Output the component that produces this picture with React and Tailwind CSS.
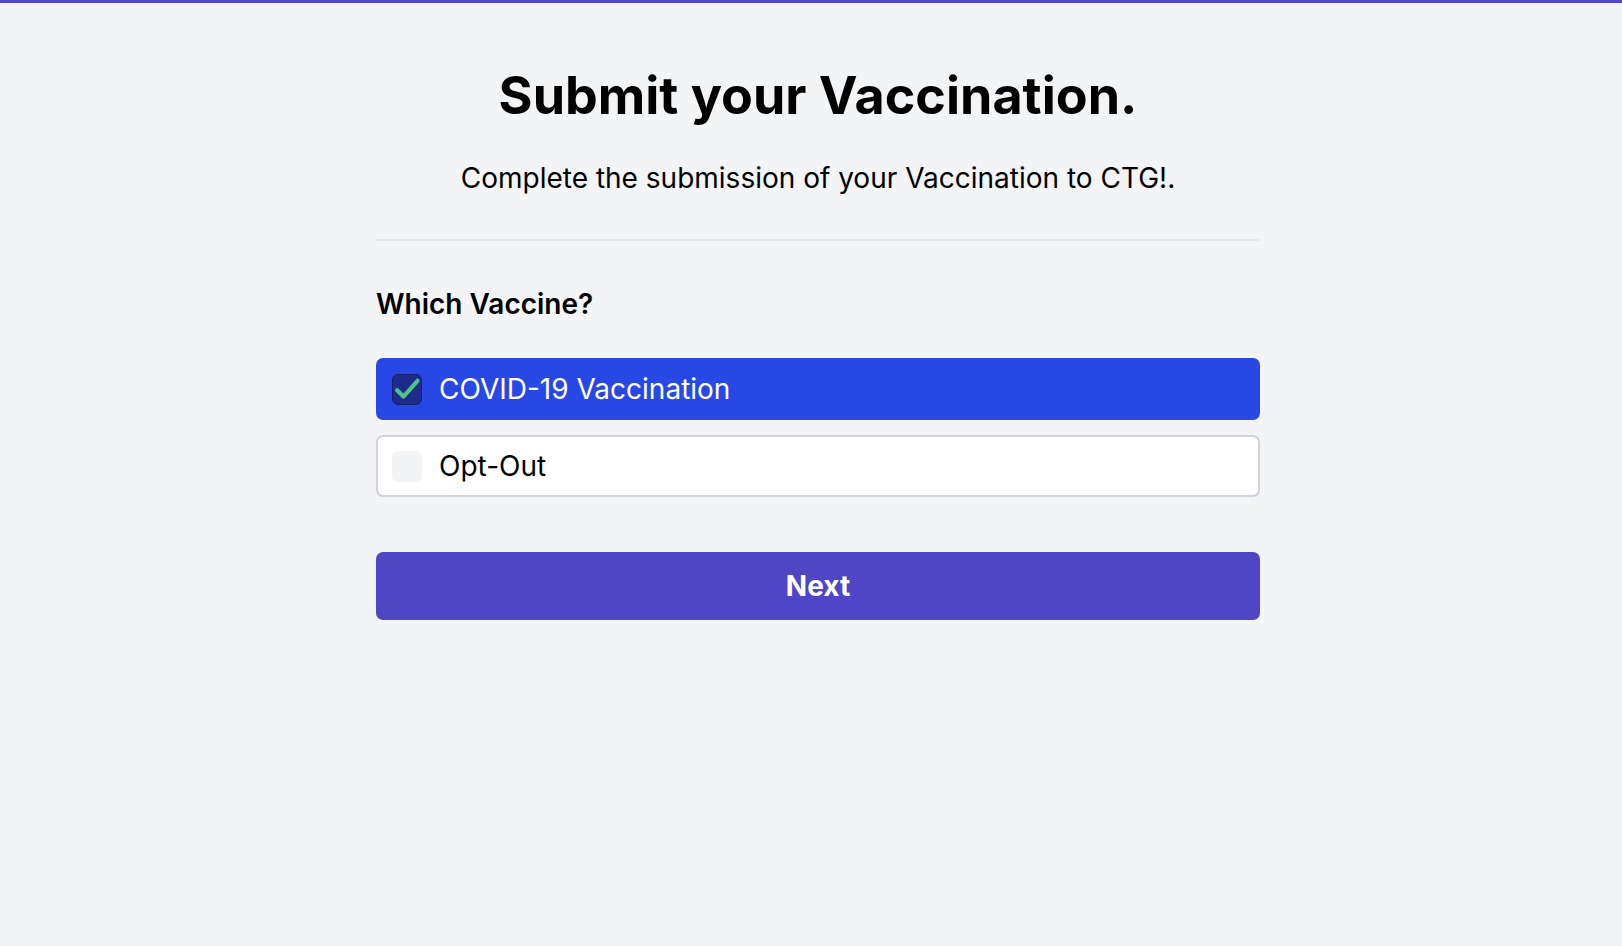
import { useState } from 'react';

const options = [
  { id: 'covid', label: 'COVID-19 Vaccination' },
  { id: 'optout', label: 'Opt-Out' },
];

const App = () => {
  const [selected, setSelected] = useState('covid');

  return (
    <div
      className="min-h-screen bg-[#f3f4f6] border-t-[3px] border-[#5046c8]"
      style={{ fontFamily: 'Inter, "Noto Sans", sans-serif' }}
    >
      <div className="flex justify-center pl-[14px]">
        <div className="w-[884px] pt-[61px]">
          <header className="text-center">
            <h1 className="text-[52px] leading-[64px] font-bold text-black">
              Submit your Vaccination.
            </h1>
            <p className="mt-[32px] text-[28px] leading-[36px] text-black">
              Complete the submission of your Vaccination to CTG!.
            </p>
          </header>

          <div className="h-[2px] bg-[#e5e7eb] mt-[43px]"></div>

          {/* Pregunta */}
          <h2 className="mt-[45px] text-[28px] leading-[36px] font-semibold text-black">Which Vaccine?</h2>

          <div className="mt-[36px] flex flex-col gap-[15px]">
            {options.map((opt) => {
              const active = selected === opt.id;
              return (
                <button
                  key={opt.id}
                  onClick={() => setSelected(opt.id)}
                  className={
                    active
                      ? 'h-[62px] w-full flex items-center gap-[17px] px-[14px] rounded-[7px] bg-[#2748e5] border-2 border-[#2748e5] text-white text-left'
                      : 'h-[62px] w-full flex items-center gap-[17px] px-[14px] rounded-[7px] bg-white border-2 border-[#d1d1d9] text-black text-left'
                  }
                >
                  {active ? (
                    <span className="w-[30px] h-[31px] rounded-[6px] bg-[#1e2b8c] border border-[#16206b] flex items-center justify-center shrink-0">
                      <svg viewBox="0 0 24 24" className="w-[28px] h-[28px]" fill="none" stroke="#4fc384" strokeWidth={3.6} strokeLinecap="round" strokeLinejoin="round">
                        <path d="M3.5 13l5.5 5.5L21 5" />
                      </svg>
                    </span>
                  ) : (
                    <span className="w-[30px] h-[31px] rounded-[6px] bg-[#f3f4f6] shrink-0"></span>
                  )}
                  <span className="text-[28px] leading-[36px]">{opt.label}</span>
                </button>
              );
            })}
          </div>

          <button className="mt-[55px] w-full h-[68px] rounded-[7px] bg-[#5046c5] text-white text-[28px] font-bold">
            Next
          </button>
        </div>
      </div>
    </div>
  );
};

export default App;
